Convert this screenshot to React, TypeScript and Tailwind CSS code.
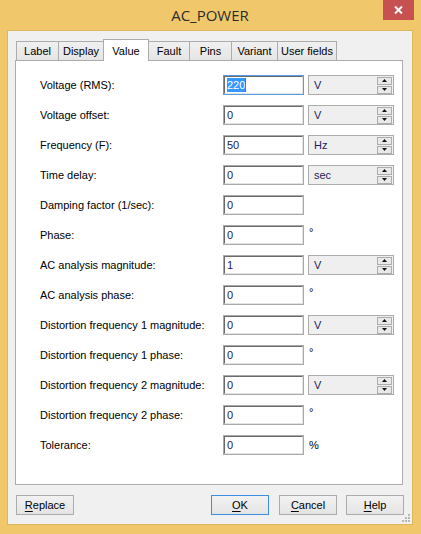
import React from 'react';

type Row = {
  label: string;
  value: string;
  unit?: string;
  symbol?: string;
  focused?: boolean;
};

const rows: Row[] = [
  { label: 'Voltage (RMS):', value: '220', unit: 'V', focused: true },
  { label: 'Voltage offset:', value: '0', unit: 'V' },
  { label: 'Frequency (F):', value: '50', unit: 'Hz' },
  { label: 'Time delay:', value: '0', unit: 'sec' },
  { label: 'Damping factor (1/sec):', value: '0' },
  { label: 'Phase:', value: '0', symbol: '°' },
  { label: 'AC analysis magnitude:', value: '1', unit: 'V' },
  { label: 'AC analysis phase:', value: '0', symbol: '°' },
  { label: 'Distortion frequency 1 magnitude:', value: '0', unit: 'V' },
  { label: 'Distortion frequency 1 phase:', value: '0', symbol: '°' },
  { label: 'Distortion frequency 2 magnitude:', value: '0', unit: 'V' },
  { label: 'Distortion frequency 2 phase:', value: '0', symbol: '°' },
  { label: 'Tolerance:', value: '0', symbol: '%' },
];

const tabs = [
  { name: 'Label', w: 'w-[43px]' },
  { name: 'Display', w: 'w-[46px]' },
  { name: 'Value', w: 'w-[46px]' },
  { name: 'Fault', w: 'w-[42px]' },
  { name: 'Pins', w: 'w-[43px]' },
  { name: 'Variant', w: 'w-[47px]' },
  { name: 'User fields', w: 'w-[60px]' },
];

function Arrow({ up }: { up?: boolean }) {
  return (
    <svg width="5" height="3" viewBox="0 0 5 3">
      {up ? <path d="M0 3 L2.5 0 L5 3 Z" fill="#111" /> : <path d="M0 0 L5 0 L2.5 3 Z" fill="#111" />}
    </svg>
  );
}

function UnitBox({ unit }: { unit: string }) {
  return (
    <div className="ml-[4px] w-[86px] h-[20px] border border-[#acacac] bg-[#efefef] flex items-center justify-between pl-[5px] pr-[1px]">
      <span className="text-[#1e1e5a]">{unit}</span>
      <div className="flex flex-col gap-[1px]">
        <div className="w-[15px] h-[8px] border border-[#acacac] bg-[#e9e9e9] flex items-center justify-center">
          <Arrow up />
        </div>
        <div className="w-[15px] h-[8px] border border-[#acacac] bg-[#e9e9e9] flex items-center justify-center">
          <Arrow />
        </div>
      </div>
    </div>
  );
}

function ValueField({ value, focused }: { value: string; focused?: boolean }) {
  return (
    <div className={`w-[81px] h-[20px] border ${focused ? 'border-[#569de5]' : 'border-[#a9a9a9]'}`}>
      <div className="h-full bg-white border-t border-l border-[#6a6a6a] border-b border-r border-b-[#e3e3e3] border-r-[#e3e3e3] flex items-center pl-[2px]">
        {focused ? (
          <span className="flex items-center">
            <span className="bg-[#3399ff] text-white leading-[14px]">{value}</span>
            <span className="w-px h-[14px] bg-[#b45a00]" />
          </span>
        ) : (
          <span className="text-[#1a1a55]">{value}</span>
        )}
      </div>
    </div>
  );
}

function Button({ label, mnemonic, isDefault, className }: { label: string; mnemonic: number; isDefault?: boolean; className?: string }) {
  return (
    <div
      className={`w-[58px] h-[20px] border ${isDefault ? 'border-[#3c8fe0]' : 'border-[#acacac]'} bg-gradient-to-b from-[#f2f2f2] to-[#e4e4e4] flex items-center justify-center text-black ${className ?? ''}`}
    >
      <span>
        {label.slice(0, mnemonic)}
        <span className="underline underline-offset-2">{label[mnemonic]}</span>
        {label.slice(mnemonic + 1)}
      </span>
    </div>
  );
}

export default function App() {
  return (
    <div
      className="w-[421px] h-[534px] bg-[#f0c86b] flex flex-col pl-[7px] pr-[8px] pb-[9px] text-[11px] text-black"
      style={{ fontFamily: '"Liberation Sans", Arial, sans-serif' }}
    >
      {/* Title bar */}
      <div className="h-[30px] relative flex items-center justify-center shrink-0">
        <span className="text-[15px] text-[#2b2b2b] pt-[1px]" style={{ fontFamily: '"Open Sans", "Noto Sans", sans-serif' }}>
          AC_POWER
        </span>
        <div className="absolute top-0 right-[-1px] w-[31px] h-[20px] bg-[#c75050] flex items-center justify-center">
          <svg width="9" height="8" viewBox="0 0 9 8">
            <path d="M1 0.5 L8 7.5 M8 0.5 L1 7.5" stroke="#fff" strokeWidth="2" />
          </svg>
        </div>
      </div>

      {/* Client area */}
      <div className="flex-1 bg-[#f0f0f0] border border-[#d9b85f] flex flex-col pt-[8px] pl-[7px] pr-[9px] pb-[9px] relative">
        {/* Tabs */}
        <div className="flex items-end h-[21px] pl-[1px] relative z-10">
          {tabs.map((t, i) => {
            const active = t.name === 'Value';
            return (
              <div
                key={t.name}
                className={`${t.w} ${i > 0 ? '-ml-px' : ''} border border-[#acacac] flex justify-center ${
                  active
                    ? 'h-[22px] bg-white border-b-0 relative z-10 -mb-px items-start pt-[3px]'
                    : 'h-[19px] bg-gradient-to-b from-[#f0f0f0] to-[#e5e5e5] border-b-0 items-center'
                }`}
              >
                {t.name}
              </div>
            );
          })}
        </div>

        {/* Panel */}
        <div className="flex-1 bg-white border border-[#acacac] pt-[14px] pl-[24px]">
          <div className="flex flex-col gap-[10px]">
            {rows.map((r) => (
              <div key={r.label} className="flex items-center h-[20px]">
                <div className="w-[183px]">{r.label}</div>
                <ValueField value={r.value} focused={r.focused} />
                {r.unit && <UnitBox unit={r.unit} />}
                {r.symbol && <span className={`ml-[5px] ${r.symbol === '°' ? '-mt-[5px]' : ''}`}>{r.symbol}</span>}
              </div>
            ))}
          </div>
        </div>

        {/* Buttons */}
        <div className="flex items-center mt-[10px] pl-[1px]">
          <Button label="Replace" mnemonic={0} />
          <div className="flex-1" />
          <Button label="OK" mnemonic={0} isDefault />
          <Button label="Cancel" mnemonic={0} className="ml-[10px]" />
          <Button label="Help" mnemonic={0} className="ml-[9px] -mr-[1px]" />
        </div>

        {/* Resize grip */}
        <svg className="absolute right-[1px] bottom-[1px]" width="9" height="9" viewBox="0 0 9 9">
          <rect x="6" y="0" width="2" height="2" fill="#b8b8b8" />
          <rect x="3" y="3" width="2" height="2" fill="#b8b8b8" />
          <rect x="6" y="3" width="2" height="2" fill="#b8b8b8" />
          <rect x="0" y="6" width="2" height="2" fill="#b8b8b8" />
          <rect x="3" y="6" width="2" height="2" fill="#b8b8b8" />
          <rect x="6" y="6" width="2" height="2" fill="#b8b8b8" />
        </svg>
      </div>
    </div>
  );
}
